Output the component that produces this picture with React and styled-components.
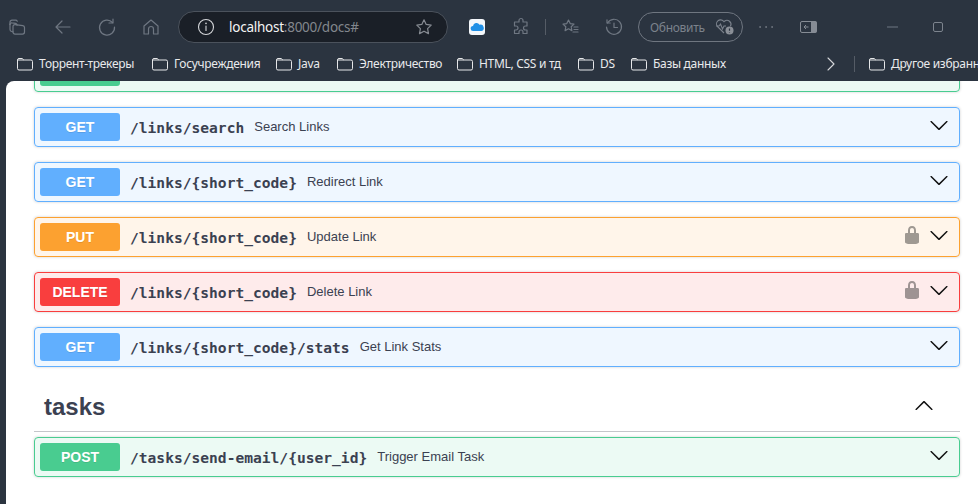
import React from 'react';
import styled, { createGlobalStyle } from 'styled-components';

const Global = createGlobalStyle`
  html, body { margin: 0; padding: 0; height: 100%; overflow: hidden; background: #2b3440; }
  #root { height: 504px; }
  * { box-sizing: border-box; }
`;

const Browser = styled.div`
  width: 978px; height: 504px; display: flex; flex-direction: column;
  background: #2b3440; overflow: hidden;
`;
const Toolbar = styled.div`
  height: 46px; flex: none; display: flex; align-items: center; padding: 8px 0 0 0; position: relative;
`;
const Slot = styled.div`
  flex: none; width: ${p => p.$w}px; margin-left: ${p => p.$ml || 0}px;
  display: flex; align-items: center; justify-content: center; color: ${p => p.$c || '#6f7782'};
`;
const UrlBar = styled.div`
  flex: none; width: 270px; height: 32px; margin-left: 17px; display: flex; align-items: center;
  border: 1px solid #4b525c; border-radius: 16px; background: #1a1f27; padding: 0 13px 0 17px; color: #d5d7da;
`;
const UrlText = styled.div`
  margin-left: 13px; flex: 1; font: 13.5px "Noto Sans", sans-serif; letter-spacing: -0.25px; color: #83878d; white-space: nowrap;
  b { font-weight: 400; color: #f4f4f4; }
`;
const StarMark = styled.span`
  display: flex; color: #868b92;
`;
const VDivider = styled.div`
  flex: none; width: 1px; height: 16px; background: #555c66; margin-left: ${p => p.$ml || 0}px;
`;
const UpdatePill = styled.div`
  flex: none; width: 105px; height: 30px; margin-left: 14px; border: 1px solid #6f7680; border-radius: 15px;
  display: flex; align-items: center; padding-left: 11px; gap: 10px; color: #7b828c;
  font: 12px "Noto Sans", sans-serif; letter-spacing: -0.3px;
`;
const Bookmarks = styled.div`
  height: 35px; flex: none; display: flex; align-items: center; padding: 0 0 0 17px; white-space: nowrap;
`;
const Bookmark = styled.div`
  flex: none; display: flex; align-items: center; gap: 6px; width: ${p => p.$w}px;
  margin-left: ${p => p.$ml || 0}px;
  font: 12px "Noto Sans", sans-serif; letter-spacing: -0.3px; color: #e9eaec;
`;
const FolderIcon = () => (
  <svg width="16" height="14" viewBox="0 0 16 14" fill="none" stroke="#e6e7e9" strokeWidth="1" style={{ flex: 'none' }}>
    <path d="M2 1.500h3.200l1.600 1.500H14a1.500 1.500 0 0 1 1.500 1.500v7a1.500 1.500 0 0 1-1.500 1.500H2A1.500 1.500 0 0 1 .5 11.500v-8.500A1.500 1.500 0 0 1 2 1.500z" />
    <path d="M.8 3h6" />
  </svg>
);

const Page = styled.main`
  flex: 1; min-height: 0; margin-left: 6px; background: #fff; border-top-left-radius: 8px; overflow: hidden;
  padding: 0 18px 0 28px;
`;
const Blocks = styled.div`
  margin-top: -29px; display: flex; flex-direction: column;
`;
const kinds = {
  GET: ['#61affe', 'rgba(97,175,254,.1)'],
  POST: ['#49cc90', 'rgba(73,204,144,.1)'],
  PUT: ['#fca130', 'rgba(252,161,48,.1)'],
  DELETE: ['#f93e3e', 'rgba(249,62,62,.1)'],
};
const Block = styled.div`
  height: 40px; margin-bottom: 15px; border: 1px solid ${p => kinds[p.$m][0]}; background: ${p => kinds[p.$m][1]};
  border-radius: 4px; box-shadow: 0 0 3px rgba(0,0,0,.19); padding: 5px; display: flex; align-items: center;
`;
const Method = styled.div`
  flex: none; width: 80px; height: 28px; border-radius: 3px; background: ${p => kinds[p.$m][0]};
  display: flex; align-items: center; justify-content: center; padding-bottom: 1px;
  font: bold 14px "Liberation Sans", Arial, sans-serif; color: #fff; text-shadow: 0 1px 0 rgba(0,0,0,.1);
`;
const Path = styled.span`
  padding: 0 10px; font: bold 14.6px "DejaVu Sans Mono", monospace; color: #3b4151; white-space: nowrap;
`;
const Summary = styled.span`
  flex: 1; font: 13px "Liberation Sans", Arial, sans-serif; color: #3b4151; white-space: nowrap; padding-bottom: 1px;
`;
const LockBox = styled.span`
  flex: none; width: 20px; height: 20px; margin-right: 7px; display: flex; opacity: .4; position: relative; top: -2px;
`;
const Chevron = styled.svg`
  flex: none; width: 20px; height: 20px; margin-right: 5px; fill: #111; position: relative; top: -2px;
`;
const ChevronUp = styled(Chevron)`
  transform: scaleY(-1); margin-right: 1px; top: -1px;
`;
const TagHeader = styled.div`
  height: 50px; margin-bottom: 5px; padding: 0 25px 0 10px; border-bottom: 1px solid rgba(59,65,81,.3);
  display: flex; align-items: center; justify-content: space-between;
`;
const TagName = styled.h3`
  margin: 0; font: bold 24px "Liberation Sans", Arial, sans-serif; color: #3b4151;
`;

const arrow = "M17.418 6.109c.272-.268.709-.268.979 0s.271.701 0 .969l-7.908 7.830c-.27.268-.707.268-.979 0l-7.908-7.830c-.27-.268-.27-.701 0-.969.271-.268.709-.268.979 0L10 13.250l7.418-7.141z";
const Lock = () => (
  <LockBox>
    <svg width="20" height="20" viewBox="0 0 20 20" fill="#111">
      <path d="M15.8 8H14V5.600C14 2.703 12.665 1 10 1 7.334 1 6 2.703 6 5.600V8H4c-.553 0-1 .646-1 1.199V17c0 .549.428 1.139.951 1.307l1.197.387C5.672 18.861 6.550 19 7.100 19h5.800c.549 0 1.428-.139 1.951-.307l1.196-.387c.524-.167.953-.757.953-1.306V9.199C17 8.646 16.352 8 15.800 8zM8 8V5.199C8 3.754 8.797 3 10 3c1.203 0 2 .754 2 2.199V8z" fillRule="evenodd" />
    </svg>
  </LockBox>
);

const Row = ({ m, path, text, lock }) => (
  <Block $m={m}>
    <Method $m={m}>{m}</Method>
    <Path>{path}</Path>
    <Summary>{text}</Summary>
    {lock && <Lock />}
    <Chevron viewBox="0 0 20 20"><path d={arrow} /></Chevron>
  </Block>
);

const Ico = ({ w = 20, children, sw = 1.2 }) => (
  <svg width={w} height={w} viewBox="0 0 20 20" fill="none" stroke="currentColor" strokeWidth={sw} strokeLinecap="round" strokeLinejoin="round">{children}</svg>
);

export default function App() {
  return (
    <Browser>
      <Global />
      <Toolbar>
        <Slot $w={20} $ml={7}>
          <Ico>
            <path d="M3 7.500V5.200A2 2 0 0 1 5 3.200h3.500a2 2 0 0 1 1.800 1" />
            <path d="M3 7.500c0-1 .9-1.800 2-1.600l3.500.5a2 2 0 0 1 1.600 1.800" />
            <path d="M3 7.500v5a2 2 0 0 0 1.700 2l1.300.3" />
            <path d="M6 9.500a2 2 0 0 1 2.300-1.900l7.500 1a2 2 0 0 1 1.700 2v4.500a2 2 0 0 1-2 2H8a2 2 0 0 1-2-2z" />
          </Ico>
        </Slot>
        <Slot $w={20} $ml={26}>
          <Ico><path d="M17 10H3M9 4l-6 6 6 6" /></Ico>
        </Slot>
        <Slot $w={20} $ml={24}>
          <Ico><path d="M15.500 5.500A7.500 7.500 0 1 0 17.500 10" /><path d="M16 2v4h-4" /></Ico>
        </Slot>
        <Slot $w={20} $ml={24}>
          <Ico><path d="M3 9l7-6 7 6v8h-4.500v-5a2.500 2.500 0 0 0-5 0v5H3z" /></Ico>
        </Slot>
        <UrlBar>
          <Ico sw={1.1}><circle cx="10" cy="10" r="7.500" /><path d="M10 9v4.500" /><path d="M10 6.300v.2" strokeWidth="1.600" /></Ico>
          <UrlText><b>localhost</b>:8000/docs#</UrlText>
          <StarMark><Ico><path d="M10 2.800l2.200 4.600 5 .7-3.600 3.500.9 5L10 14.200l-4.500 2.400.9-5L2.800 8.100l5-.7z" /></Ico></StarMark>
        </UrlBar>
        <Slot $w={16} $ml={21}>
          <svg width="16" height="16" viewBox="0 0 16 16">
            <rect width="16" height="16" rx="3" fill="#f4f7fb" />
            <path d="M4.300 12a2.500 2.500 0 0 1-.3-5 3.500 3.500 0 0 1 6.500-1.200A3 3 0 0 1 12.500 12z" fill="#1f8fe6" />
          </svg>
        </Slot>
        <Slot $w={20} $ml={26}>
          <Ico><path d="M8 3.500a2 2 0 0 1 4 0V5h4v4h-1.500a2 2 0 0 0 0 4H16v3.500h-4V15a2 2 0 0 0-4 0v1.500H3.500V13H5a2 2 0 0 0 0-4H3.500V5H8z" /></Ico>
        </Slot>
        <VDivider $ml={14} />
        <Slot $w={20} $ml={14}>
          <Ico><path d="M8.500 3l1.700 3.600 3.800.5-2.800 2.700.7 3.800-3.400-1.800-3.400 1.800.7-3.800L3 7.100l3.800-.5z" /><path d="M14 10h4M14 12.500h4M13 15h5" /></Ico>
        </Slot>
        <Slot $w={20} $ml={24}>
          <Ico><path d="M3.500 6A7.500 7.500 0 1 1 2.500 10" /><path d="M3 2.800V6h3.200" /><path d="M10 6v4.500h3.500" /></Ico>
        </Slot>
        <UpdatePill>
          <span>Обновить</span>
          <svg width="20" height="18" viewBox="0 0 20 18" fill="none" stroke="currentColor" strokeWidth="1.100">
            <path d="M9 15L2.500 8.500a4 4 0 0 1 6-5.300l.5.500.5-.5a4 4 0 0 1 6 5" />
            <path d="M1 8h3l1.500-2 2 5 1.500-3h2" />
            <circle cx="14.500" cy="12.500" r="4" fill="#8a8f97" stroke="none" />
            <path d="M14.500 10.500v2.200M14.500 14v.4" stroke="#2b3440" strokeWidth="1.200" />
          </svg>
        </UpdatePill>
        <Slot $w={20} $ml={13} $c="#8f959d">
          <Ico sw={1.500}><path d="M4 10h.2M10 10h.2M16 10h.2" /></Ico>
        </Slot>
        <Slot $w={20} $ml={23}>
          <svg width="18" height="14" viewBox="0 0 18 14">
            <rect x=".5" y="1.500" width="16" height="11" rx="1.500" fill="none" stroke="#868c95" />
            <rect x="11" y="1.500" width="5.500" height="11" fill="#868c95" />
            <path d="M8.500 7H4M6 5L4 7l2 2" fill="none" stroke="#868c95" />
          </svg>
        </Slot>
        <Slot $w={20} $ml={64}>
          <svg width="12" height="2" viewBox="0 0 12 2"><path d="M0 1h11" stroke="#6f7782" /></svg>
        </Slot>
        <Slot $w={20} $ml={25}>
          <svg width="10" height="10" viewBox="0 0 10 10"><rect x=".5" y=".5" width="9" height="9" rx="1.500" fill="none" stroke="#7d848e" /></svg>
        </Slot>
      </Toolbar>
      <Bookmarks>
        <Bookmark $w={135}><FolderIcon />Торрент-трекеры</Bookmark>
        <Bookmark $w={124}><FolderIcon />Госучреждения</Bookmark>
        <Bookmark $w={61}><FolderIcon />Java</Bookmark>
        <Bookmark $w={120}><FolderIcon />Электричество</Bookmark>
        <Bookmark $w={121}><FolderIcon />HTML, CSS и тд</Bookmark>
        <Bookmark $w={53}><FolderIcon />DS</Bookmark>
        <Bookmark $w={190}><FolderIcon />Базы данных</Bookmark>
        <Slot $w={20} $c="#d5d7da">
          <Ico sw={1.100}><path d="M7 4l6 6-6 6" /></Ico>
        </Slot>
        <VDivider $ml={13} />
        <Bookmark $w={160} $ml={14}><FolderIcon />Другое избранное</Bookmark>
      </Bookmarks>
      <Page>
        <Blocks>
          <Block $m="POST"><Method $m="POST" /></Block>
          <Row m="GET" path="/links/search" text="Search Links" />
          <Row m="GET" path="/links/{short_code}" text="Redirect Link" />
          <Row m="PUT" path="/links/{short_code}" text="Update Link" lock />
          <Row m="DELETE" path="/links/{short_code}" text="Delete Link" lock />
          <Row m="GET" path="/links/{short_code}/stats" text="Get Link Stats" />
          <TagHeader>
            <TagName>tasks</TagName>
            <ChevronUp viewBox="0 0 20 20"><path d={arrow} /></ChevronUp>
          </TagHeader>
          <Row m="POST" path="/tasks/send-email/{user_id}" text="Trigger Email Task" />
        </Blocks>
      </Page>
    </Browser>
  );
}
